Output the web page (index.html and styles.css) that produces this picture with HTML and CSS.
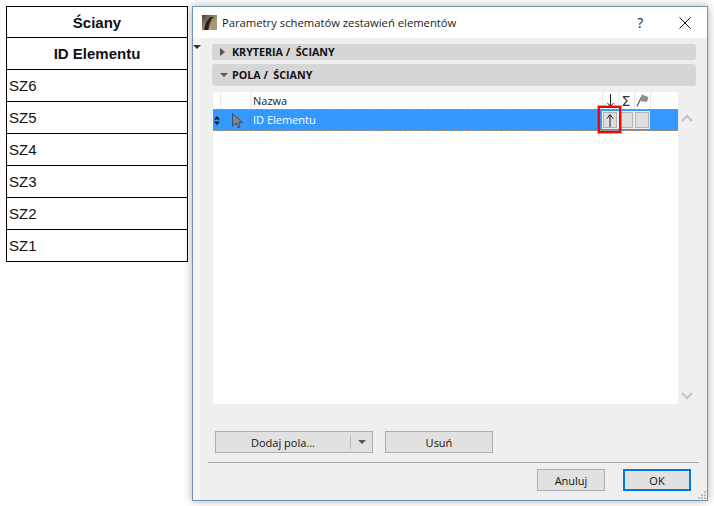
FILE: index.html
```html
<!DOCTYPE html>
<html lang="pl">
<head>
<meta charset="utf-8">
<title>Parametry schematów zestawień elementów</title>
<link rel="stylesheet" href="styles.css">
</head>
<body>
<div class="desk">
  <div class="sheet">
    <div class="sheet-row head">Ściany</div>
    <div class="sheet-row head">ID Elementu</div>
    <div class="sheet-row">SZ6</div>
    <div class="sheet-row">SZ5</div>
    <div class="sheet-row">SZ4</div>
    <div class="sheet-row">SZ3</div>
    <div class="sheet-row">SZ2</div>
    <div class="sheet-row">SZ1</div>
  </div>
  <div class="dialog">
    <div class="titlebar">
      <svg class="app-icon" width="15" height="15" viewBox="0 0 15 15">
        <defs><linearGradient id="lg" x1="0" y1="0" x2="1" y2="1"><stop offset="0" stop-color="#4a4030"/><stop offset=".5" stop-color="#9a8a6e"/><stop offset="1" stop-color="#cdbd9f"/></linearGradient></defs>
        <rect width="15" height="15" fill="url(#lg)"/>
        <path d="M2 15 C3.500 7 6 2.500 10 2 L12 2 C9 4 7 9 6.500 15 Z" fill="#2a241b"/>
        <path d="M9 15 C9.500 10 10.500 7 12.500 5 L15 5 L15 15 Z" fill="#a8977a"/>
      </svg>
      <span class="title">Parametry schematów zestawień elementów</span>
      <span class="help">?</span>
      <svg class="close" width="12" height="12" viewBox="0 0 12 12"><path d="M.5.5l11 11M11.5.5l-11 11" stroke="#111" stroke-width="1" fill="none"/></svg>
    </div>
    <div class="content">
      <span class="side-tri"></span>
      <div class="bar bar-small"><span class="tri-right"></span><span class="bar-label">KRYTERIA /&nbsp; ŚCIANY</span></div>
      <div class="bar bar-large"><span class="tri-down"></span><span class="bar-label">POLA /&nbsp; ŚCIANY</span></div>
      <div class="list-wrap">
        <div class="list">
          <div class="grid list-head">
            <span class="cell"></span>
            <span class="cell div"></span>
            <span class="cell div name-h">Nazwa</span>
            <span class="cell div ic">
              <svg width="9" height="13" viewBox="0 0 9 13"><path d="M4.500 0v12.500M1.500 9l3 3.500 3-3.500" stroke="#222" fill="none"/></svg>
            </span>
            <span class="cell div ic sigma">Σ</span>
            <span class="cell div ic">
              <svg width="13" height="13" viewBox="0 0 13 13"><path d="M1 12.500L6 2" stroke="#555" stroke-width="1.200" fill="none"/><path d="M5.500 .5L12.500 3L11 8L4 7z" fill="#8f8f8f"/></svg>
            </span>
            <span class="cell div"></span>
          </div>
          <div class="grid list-row">
            <span class="cell grip"><svg width="6" height="9" viewBox="0 0 6 9"><path d="M3 0l3 3.500H0zM3 9l3-3.500H0z" fill="#111"/></svg></span>
            <span class="cell cur">
              <svg width="11" height="15" viewBox="0 0 11 15"><path d="M.5.500L10.500 9.500H6.500L8 14L6 14.500L4 10L.5 13z" fill="#858585" stroke="#2c3e50" stroke-width=".8"/></svg>
            </span>
            <span class="cell name">ID Elementu</span>
            <span class="cell box-c"><span class="chk"><svg width="8" height="13" viewBox="0 0 8 13"><path d="M4 13V1M1 4.500l3-4 3 4" stroke="#222" fill="none"/></svg></span></span>
            <span class="cell box-c"><span class="chk"></span></span>
            <span class="cell box-c"><span class="chk"></span></span>
            <span class="cell"></span>
          </div>
          <span class="highlight"></span>
        </div>
        <div class="scroll">
          <svg width="12" height="8" viewBox="0 0 12 8"><path d="M1 7l5-5 5 5" stroke="#c4c4c4" stroke-width="2.200" fill="none"/></svg>
          <svg width="12" height="8" viewBox="0 0 12 8"><path d="M1 1l5 5 5-5" stroke="#c4c4c4" stroke-width="2.200" fill="none"/></svg>
        </div>
      </div>
      <div class="actions">
        <div class="btn split"><span class="split-main">Dodaj pola...</span><span class="split-arrow"><span class="tri-down"></span></span></div>
        <div class="btn remove">Usuń</div>
      </div>
      <div class="sep"></div>
      <div class="footer">
        <div class="btn foot">Anuluj</div>
        <div class="btn foot ok">OK</div>
      </div>
      <svg class="grip-corner" width="8" height="8" viewBox="0 0 8 8"><path d="M6 0h2v2H6zM3 3h2v2H3zM6 3h2v2H6zM0 6h2v2H0zM3 6h2v2H3zM6 6h2v2H6z" fill="#bcbcbc"/></svg>
    </div>
  </div>
</div>
</body>
</html>
```
FILE: styles.css
```css
* { box-sizing: border-box; }
html, body { margin: 0; height: 100%; background: #fff; }
body { overflow: hidden; }
.desk { display: flex; align-items: flex-start; width: 714px; height: 506px; padding: 6px 0 0 6px; font-family: "Open Sans", "Noto Sans", sans-serif; color: #111; }

.sheet { width: 182px; border: 1px solid #000; border-bottom: 0; font-family: "Liberation Sans", Arial, sans-serif; font-size: 15px; color: #111; }
.sheet-row { height: 32px; border-bottom: 1px solid #000; padding-left: 2px; display: flex; align-items: center; }
.sheet-row:first-child { height: 31px; }
.sheet-row.head { font-weight: 700; justify-content: center; padding-left: 0; }

.dialog { width: 516px; height: 495px; margin-left: 4px; border: 1px solid #6f93b5; background: #efefef; display: flex; flex-direction: column; box-shadow: 0 0 9px rgba(0,0,0,.32); }
.titlebar { height: 31px; flex: none; background: #fff; display: flex; align-items: center; padding-left: 9px; }
.app-icon { flex: none; }
.title { margin-left: 5px; font-size: 11.250px; color: #222; white-space: nowrap; }
.help { margin-left: 181px; font-size: 14px; color: #222; }
.close { margin: 0 16px 0 auto; flex: none; }

.content { position: relative; flex: 1; padding: 6px 11px 0 19px; background: linear-gradient(to right, #f5f5f5 0, #f5f5f5 7px, #efefef 7px); display: flex; flex-direction: column; }
.side-tri { position: absolute; left: 0; top: 7px; width: 0; height: 0; border: 4px solid transparent; border-top: 4px solid #333; border-bottom: 0; }
.bar { background: #d6d6d6; border-radius: 3px; display: flex; align-items: center; padding-left: 8px; font-size: 10.700px; font-weight: 700; color: #111; }
.bar-small { height: 16px; }
.bar-large { height: 22px; margin-top: 4px; }
.bar-label { margin-left: 7px; white-space: nowrap; }
.bar-large .bar-label { margin-left: 4px; }
.tri-right { width: 0; height: 0; border-left: 5px solid #555; border-top: 4px solid transparent; border-bottom: 4px solid transparent; }
.tri-down { width: 0; height: 0; border-top: 4px solid #555; border-left: 4px solid transparent; border-right: 4px solid transparent; display: inline-block; }

.list-wrap { display: flex; margin-top: 6px; margin-left: 1px; }
.list { position: relative; width: 465px; height: 312px; background: #fff; }
.grid { display: grid; grid-template-columns: 7px 30px 352px 16px 16px 16px 28px; }
.list-head { height: 17px; }
.cell { display: flex; align-items: center; min-width: 0; }
.div { border-left: 1px solid #e8e8e8; }
.name-h { padding-left: 2px; font-size: 11px; color: #222; }
.ic { justify-content: center; }
.sigma { font-family: "DejaVu Sans", sans-serif; font-size: 14px; color: #333; padding-right: 1px; }
.list-row { height: 22px; background: #3399ff; border-top: 1px dashed #d08a4a; border-bottom: 1px dashed #d08a4a; }
.grip { justify-content: flex-end; }
.cur { padding-left: 12px; }
.name { padding: 0 0 2px 3px; color: #fff; font-size: 11px; }
.box-c { justify-content: center; }
.chk { width: 16px; height: 18px; background: #dedede; border: 1px solid #ececec; box-shadow: inset 0 0 0 1px #b4b4b4; display: flex; align-items: center; justify-content: center; }
.highlight { position: absolute; left: 385px; top: 14px; width: 23px; height: 27px; border: 2px solid #ff0000; box-shadow: 0 0 0 1px rgba(255,0,0,.4); }

.scroll { width: 17px; padding: 22px 0 4px 0; display: flex; flex-direction: column; justify-content: space-between; align-items: center; }

.actions { display: flex; gap: 12px; margin-top: 27px; margin-left: 3px; }
.btn { height: 22px; background: #e1e1e1; border: 1px solid #adadad; font-size: 11px; color: #111; display: flex; align-items: center; justify-content: center; }
.split { width: 158px; justify-content: flex-start; }
.split-main { width: 134px; text-align: center; }
.split-arrow { flex: 1; height: 14px; border-left: 1px solid #bcbcbc; display: flex; align-items: center; justify-content: center; }
.remove { width: 108px; }
.sep { height: 1px; background: #a8a8a8; margin: 9px -3px 0 -4px; }
.footer { display: flex; justify-content: flex-end; gap: 18px; margin-top: 6px; margin-right: 5px; }
.foot { width: 68px; }
.ok { border: 2px solid #0078d7; }
.grip-corner { position: absolute; right: 1px; bottom: 1px; }
```
